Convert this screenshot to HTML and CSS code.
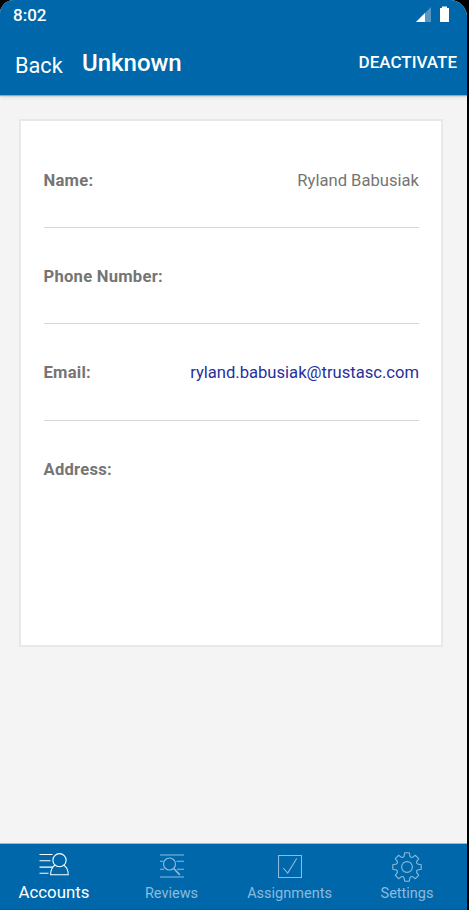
FILE: index.html
```html
<!DOCTYPE html>
<html lang="en">
<head>
<meta charset="utf-8">
<title>Account details</title>
<link rel="stylesheet" href="styles.css">
</head>
<body>
<div class="screen">
  <header class="header">
    <div class="status">
      <span class="clock">8:02</span>
      <svg class="status-icons" width="34" height="17" viewBox="0 0 34 17">
        <path d="M0 16 15 1V16Z" fill="#5596c3"/>
        <path d="M0 16 9 7V16Z" fill="#fff"/>
        <path d="M24 2h2V0.5h5V2h2V16H24Z" fill="#fff"/>
      </svg>
    </div>
    <div class="toolbar">
      <span class="back">Back</span>
      <h1 class="title">Unknown</h1>
      <span class="action">DEACTIVATE</span>
    </div>
  </header>
  <main class="content">
    <section class="card">
      <div class="row"><span class="label">Name:</span><span class="value">Ryland Babusiak</span></div>
      <div class="row"><span class="label">Phone Number:</span></div>
      <div class="row"><span class="label">Email:</span><span class="value email">ryland.babusiak@trustasc.com</span></div>
      <div class="row"><span class="label">Address:</span></div>
    </section>
  </main>
  <nav class="tabs">
    <div class="tab active">
      <svg width="30" height="26" viewBox="0 0 30 26">
        <path d="M.5 2.500h13M.5 8.800h11M.5 15.100h13M.5 21.300h9"/>
        <circle cx="20.500" cy="8.200" r="6.600"/>
        <path d="M16.300 13c-3.200 1.700-4.600 5.200-4.700 9.700h17.600c0-4.500-1.500-8-4.700-9.700"/>
      </svg>
      <span>Accounts</span>
    </div>
    <div class="tab">
      <svg width="25" height="26" viewBox="0 0 25 26">
        <path d="M1 3h24M1 9.300h3.500M17.500 9.300h7.500M1 17.300h4M18 17.300h7M1 25h24"/>
        <circle cx="10.500" cy="12" r="6"/>
        <path d="M14.500 16.300l6.300 6.600" stroke-width="1.600"/>
      </svg>
      <span>Reviews</span>
    </div>
    <div class="tab">
      <svg width="24" height="26" viewBox="0 0 24 26">
        <path d="M.5 3.500h23v22H.5ZM5.200 16l4.500 5 9-14.500"/>
      </svg>
      <span>Assignments</span>
    </div>
    <div class="tab">
      <svg width="30" height="30" viewBox="-15 -15 30 30">
        <g stroke-linejoin="round">
        <path d="M-3-10.600-2.300-14.200H2.300L3-10.600Q4.300-9.200 5.400-9.600L8.400-11.700 11.700-8.400 9.600-5.400Q9.200-4 10.600-3L14.200-2.300V2.300L10.600 3Q9.200 4 9.600 5.400L11.700 8.400 8.400 11.700 5.400 9.600Q4.300 9.200 3 10.600L2.300 14.200H-2.300L-3 10.600Q-4.300 9.200-5.400 9.600L-8.400 11.700-11.700 8.400-9.600 5.400Q-9.200 4-10.600 3L-14.200 2.300V-2.300L-10.600-3Q-9.200-4-9.600-5.400L-11.700-8.400-8.400-11.700-5.400-9.600Q-4.300-9.200-3-10.600Z"/>
        <circle r="5.400"/>
        </g>
      </svg>
      <span>Settings</span>
    </div>
  </nav>
</div>
</body>
</html>
```
FILE: styles.css
```css
* { box-sizing: border-box; }
body {
  margin: 0;
  background: #000;
  font-family: Roboto, "Liberation Sans", sans-serif;
}
.screen {
  width: 467px;
  height: 910px;
  display: flex;
  flex-direction: column;
  background: #f4f4f4;
  border-radius: 14px 17px 0 0;
  overflow: hidden;
}
.header {
  height: 95px;
  flex: none;
  background: #0068aa;
  color: #fff;
  box-shadow: 0 1px 1px #8fa9bb, 0 2px 4px rgba(0, 0, 0, .12);
}
.status {
  height: 30px;
  padding: 0 17px 0 13px;
  display: flex;
  align-items: center;
  justify-content: space-between;
}
.clock { font-size: 17px; font-weight: 500; line-height: 30px; }
.status-icons { margin-top: -2px; }
.toolbar {
  height: 65px;
  padding: 0 10px 0 15px;
  display: flex;
  align-items: center;
}
.back { width: 67px; font-size: 21.700px; padding-top: 5px; }
.title { margin: 0; padding-top: 1px; font-size: 24px; font-weight: 500; }
.action { margin-left: auto; padding-bottom: 2px; font-size: 17px; font-weight: 500; }
.content { flex: 1; padding: 24px 24px 0 19px; }
.card {
  height: 528px;
  border: 2px solid #e8e8e8;
  background: #fff;
  padding: 11px 22px 0 22.500px;
}
.row {
  height: 96.200px;
  padding-top: 1.500px;
  display: flex;
  align-items: center;
  justify-content: space-between;
  border-bottom: 1.500px solid #d6d6d6;
  color: #757575;
  font-size: 16.600px;
}
.row:last-child { border: 0; }
.label { font-weight: 700; letter-spacing: .25px; }
.email { color: #26309c; }
.tabs {
  height: 67px;
  flex: none;
  display: grid;
  grid-template-columns: 108px 127px 109px 126px;
  background: #0068aa;
  border-top: 1px solid #9cb8ca;
  box-shadow: inset 0 -1px #005b98;
}
.tab {
  display: grid;
  grid-template-rows: 35px 24px;
  justify-items: center;
  align-content: start;
  padding-top: 3px;
  color: #8abbdd;
  font-size: 14.500px;
  line-height: 24px;
}
.tab svg {
  margin-top: 5px;
  fill: none;
  stroke: #8abbdd;
  stroke-width: 1.100;
}
.active { color: #fff; font-size: 16.800px; line-height: 20px; }
.active svg { stroke: #fff; }
```
